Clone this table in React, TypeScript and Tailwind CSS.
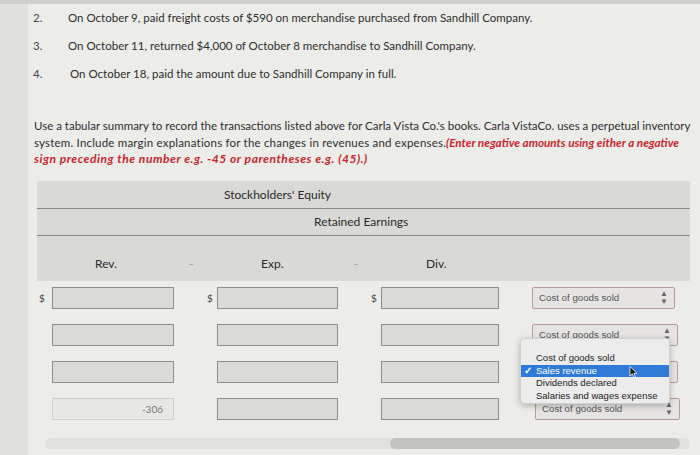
import React from "react";

const lato = { fontFamily: "Lato, 'Open Sans', sans-serif" };

function Box({ light, value }: { light?: boolean; value?: string }) {
  return (
    <div
      className={
        light
          ? "h-[22px] border border-[#cfcfcc] bg-[#e7e7e4] flex items-center justify-end pr-[10px] text-[10px] text-[#777]"
          : "h-[22px] border border-[#8d8d8b] bg-[#dadad7]"
      }
    >
      {value}
    </div>
  );
}

function Select({ w, ml, hidden }: { w: string; ml: string; hidden?: boolean }) {
  return (
    <div
      className={`h-[22px] border border-[#b99a9a] bg-[#e6e4e2] rounded-[2px] flex items-center justify-between pl-[6px] pr-[6px] ${w} ${ml}`}
      style={{ fontFamily: "'Liberation Sans', Arial, sans-serif" }}
    >
      <span className="text-[9.7px] text-[#555]">{hidden ? "" : "Cost of goods sold"}</span>
      <span className="text-[8px] text-[#666] leading-[8px] flex flex-col items-center">
        <span>▲</span>
        <span>▼</span>
      </span>
    </div>
  );
}

export default function App() {
  return (
    <div className="w-[700px] h-[455px] bg-[#ecece9] flex flex-col overflow-hidden text-[#2e2e2e]" style={lato}>
      <div className="h-[4px] bg-[#cfcfcb] shrink-0" />
      <div className="flex flex-1 min-w-0">
        <div className="w-[28px] bg-[#e0e0dc] shrink-0" />
        <div className="w-[672px] min-w-0 flex flex-col">
          {/* numbered items */}
          <div className="flex flex-col text-[11.5px]">
            {[
              ["2.", "On October 9, paid freight costs of $590 on merchandise purchased from Sandhill Company."],
              ["3.", "On October 11, returned $4,000 of October 8 merchandise to Sandhill Company."],
              ["4.", "On October 18, paid the amount due to Sandhill Company in full."],
            ].map(([n, t], i) => (
              <div key={n} className="flex h-[28px] items-center">
                <span className="w-[40px] pl-[5px] text-[#444]">{n}</span>
                <span className={i === 2 ? "pl-[2px]" : ""}>{t}</span>
              </div>
            ))}
          </div>

          {/* instructions */}
          <div className="mt-[30px] pl-[6px] text-[11.5px] leading-[16px] whitespace-nowrap">
            <div>
              Use a tabular summary to record the transactions listed above for Carla Vista Co.'s books. Carla VistaCo. uses a perpetual inventory
            </div>
            <div>
              <span className="tracking-[0.2px]">system. Include margin explanations for the changes in revenues and expenses.</span>
              <span className="text-[#c8262c] font-bold italic text-[11.7px]">(Enter negative amounts using either a negative</span>
            </div>
            <div className="text-[#c8262c] font-bold italic text-[12px] tracking-[0.55px]">sign preceding the number e.g. -45 or parentheses e.g. (45).)</div>
          </div>

          {/* table header */}
          <div className="mt-[14px] ml-[9px] w-[653px] h-[100px] bg-[#d9d9d5] flex flex-col text-[12px] text-[#2a2a2a]">
            <div className="h-[28px] border-b border-[#8a8a86] flex items-center">
              <span className="pl-[187px]">Stockholders' Equity</span>
            </div>
            <div className="h-[27px] border-b border-[#8a8a86] flex items-center">
              <span className="pl-[277px]">Retained Earnings</span>
            </div>
            <div className="flex-1 flex items-end pb-[8px]">
              <span className="pl-[58px] w-[152px]">Rev.</span>
              <span className="w-[72px] text-[#999]">-</span>
              <span className="w-[93px]">Exp.</span>
              <span className="w-[72px] text-[#999]">-</span>
              <span>Div.</span>
            </div>
          </div>

          {/* inputs */}
          <div className="mt-[6px] ml-[9px] flex">
            <div className="flex flex-col gap-[15px]">
              {[0, 1, 2, 3].map((r) => (
                <div key={r} className="flex items-center">
                  <span className="w-[15px] pl-[2px] text-[10px] text-[#444]">{r === 0 ? "$" : ""}</span>
                  <div className="w-[122px]">
                    {r === 3 ? <Box light value="-306" /> : <Box />}
                  </div>
                </div>
              ))}
            </div>
            <div className="flex flex-col gap-[15px] ml-[33px]">
              {[0, 1, 2, 3].map((r) => (
                <div key={r} className="flex items-center">
                  <span className="w-[10px] text-[10px] text-[#444]">{r === 0 ? "$" : ""}</span>
                  <div className="w-[121px]">
                    <Box />
                  </div>
                </div>
              ))}
            </div>
            <div className="flex flex-col gap-[15px] ml-[33px]">
              {[0, 1, 2, 3].map((r) => (
                <div key={r} className="flex items-center">
                  <span className="w-[10px] text-[10px] text-[#444]">{r === 0 ? "$" : ""}</span>
                  <div className="w-[118px]">
                    <Box />
                  </div>
                </div>
              ))}
            </div>
            <div className="relative flex flex-col gap-[15px] ml-[33px]">
              <Select w="w-[143px]" ml="" />
              <Select w="w-[146px]" ml="" />
              <Select w="w-[146px]" ml="" hidden />
              <Select w="w-[145px]" ml="ml-[3px]" />
              {/* dropdown menu */}
              <div
                className="absolute left-[-12px] top-[51px] w-[150px] h-[66px] bg-[#ececec] rounded-[4px] shadow-[0_2px_6px_rgba(0,0,0,0.25)] border border-[#d0d0d0] pt-[13px] text-[9.5px] leading-[12.5px] text-[#222]"
                style={{ fontFamily: "'Liberation Sans', Arial, sans-serif" }}
              >
                <div className="pl-[15px]">Cost of goods sold</div>
                <div className="relative bg-[#2f7ad6] text-white pl-[15px] flex items-center">
                  <span className="absolute left-[3px] text-[10px] font-bold">✓</span>
                  <span>Sales revenue</span>
                  <svg className="absolute left-[108px] top-[1px]" width="9" height="12" viewBox="0 0 9 12">
                    <path d="M1 0.5 L1 10 L3.3 7.8 L5 11.3 L6.4 10.6 L4.8 7.3 L8 7.3 Z" fill="#111" stroke="#fff" strokeWidth="0.8" />
                  </svg>
                </div>
                <div className="pl-[15px]">Dividends declared</div>
                <div className="pl-[15px]">Salaries and wages expense</div>
              </div>
            </div>
          </div>

          {/* scrollbar */}
          <div className="mt-[18px] ml-[17px] w-[645px] h-[11px] bg-[#e1e1de] rounded-full flex justify-end pr-[10px]">
            <div className="w-[290px] h-[11px] bg-[#c3c3c0] rounded-full" />
          </div>
        </div>
      </div>
    </div>
  );
}
